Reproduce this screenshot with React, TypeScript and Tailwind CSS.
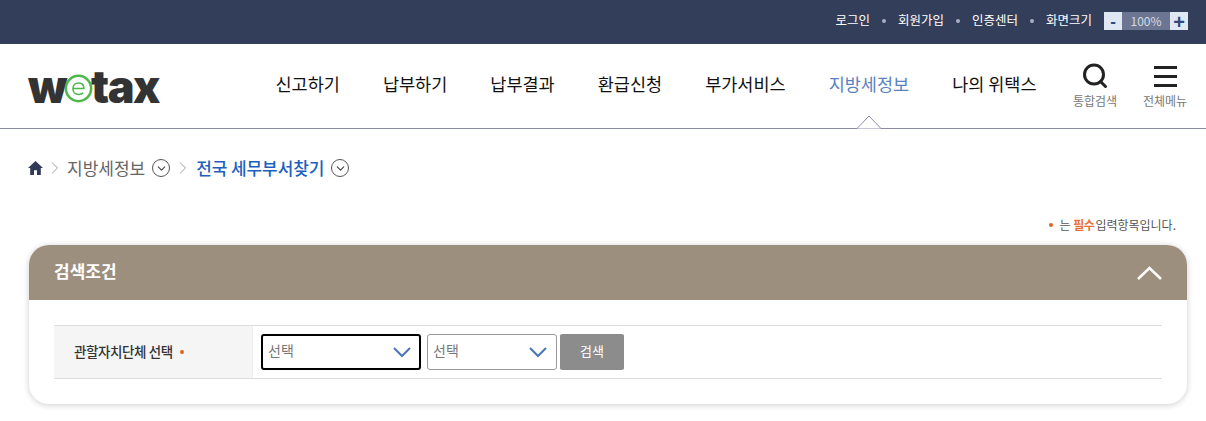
import { ChevronDown, ChevronRight } from 'lucide-react';

const font = { fontFamily: '"Noto Sans CJK KR", "Noto Sans", sans-serif' };

const topLinks = ['로그인', '회원가입', '인증센터', '화면크기'];
const navItems = ['신고하기', '납부하기', '납부결과', '환급신청', '부가서비스', '지방세정보', '나의 위택스'];

function Logo() {
  return (
    <div className="flex h-[40px] w-[132px] items-center font-['Inter',sans-serif] text-[45px] leading-none font-black tracking-[-1.5px] text-[#333333]">
      <span>w</span>
      <svg width="29" height="29" viewBox="0 0 28 28" className="mx-[-2px] mt-[5px] shrink-0">
        <circle cx="14" cy="14" r="12.2" fill="#fff" stroke="#4cb848" strokeWidth="2.4" />
        <path d="M8.6 14h10.6c0-3.4-2.2-5.4-5.1-5.4-3.2 0-5.5 2.3-5.5 5.6s2.300 5.500 5.600 5.500c1.900 0 3.300-.6 4.400-1.600" fill="none" stroke="#4cb848" strokeWidth="1.500" />
      </svg>
      <span>tax</span>
    </div>
  );
}

function CircleChevron() {
  return (
    <span className="grid size-[18px] place-items-center rounded-full border border-[#555]">
      <ChevronDown size={13} strokeWidth={2} className="text-[#444]" />
    </span>
  );
}

function SelectBox({ width, focused }: { width: string; focused?: boolean }) {
  return (
    <div
      className={`flex h-[36px] items-center justify-between rounded-[3px] bg-white pl-[5px] text-[14px] text-[#777] ${width} ${
        focused ? 'border-2 border-black pr-[8px]' : 'border border-[#999] pr-[9px]'
      }`}
    >
      <span className="mb-[3px]">선택</span>
      <svg width="18" height="11" viewBox="0 0 18 11" fill="none" stroke="#4a76b8" strokeWidth="2">
        <path d="M1 1l8 8 8-8" />
      </svg>
    </div>
  );
}

export default function App() {
  return (
    <div className="h-[421px] w-[1206px] overflow-hidden bg-white" style={font}>
      <div className="flex h-[44px] items-center justify-end bg-[#333e5b] pr-[18px] pb-[2px]">
        <ul className="mb-[1px] flex items-center text-[12.500px] text-white">
          {topLinks.map((t, i) => (
            <li key={t} className="flex items-center">
              {i > 0 && <span className="mx-[12px] size-[4px] rounded-full bg-[#a9afc0]" />}
              {t}
            </li>
          ))}
        </ul>
        <div className="ml-[12px] flex h-[18px] items-stretch text-[12px]">
          <span className="grid w-[18px] place-items-center bg-[#dfe7f3] font-['Liberation_Sans'] text-[17px] leading-none font-bold text-[#2f4a80]">-</span>
          <span className="grid w-[48px] place-items-center bg-[#6c7693] text-[#d5d9e4]">100%</span>
          <span className="grid w-[18px] place-items-center bg-[#dfe7f3] font-['Liberation_Sans'] text-[20px] leading-none font-bold text-[#2f4a80]">+</span>
        </div>
      </div>

      <header className="relative flex h-[85px] items-center border-b border-[#8a8ca6] pr-[19px] pl-[28px]">
        <Logo />
        <nav className="mb-[4px] ml-[115.500px] flex gap-[43px] text-[17.500px] text-[#111]">
          {navItems.map((n) => (
            <a key={n} className={n === '지방세정보' ? 'text-[#5a83c0]' : ''}>
              {n}
            </a>
          ))}
        </nav>
        <div className="ml-auto flex gap-[26px] text-[12px] text-[#777]">
          <div className="flex w-[44px] flex-col items-center">
            <svg width="26" height="26" viewBox="0 0 26 26" fill="none" stroke="#222" strokeWidth="3" className="mt-[1px]">
              <circle cx="12" cy="11.500" r="9.500" />
              <path d="M18.500 18.500l5 5" strokeLinecap="round" />
            </svg>
            <span className="mt-[3px] whitespace-nowrap">통합검색</span>
          </div>
          <div className="flex w-[44px] flex-col items-center">
            <div className="mt-[1px] flex h-[26px] w-[23px] flex-col justify-center gap-[6px]">
              <span className="h-[3px] bg-[#222]" />
              <span className="h-[3px] bg-[#222]" />
              <span className="h-[3px] bg-[#222]" />
            </div>
            <span className="mt-[3px] whitespace-nowrap">전체메뉴</span>
          </div>
        </div>
        <svg width="26" height="14" viewBox="0 0 26 14" className="absolute bottom-[-1px] left-[856px]">
          <path d="M0 13.500h1L13 1l12 12.500h1" fill="#fff" stroke="#8a8ca6" />
        </svg>
      </header>

      <div className="mt-[27px] flex h-[24px] items-center pl-[28px] text-[17px] text-[#666]">
        <svg width="15" height="14" viewBox="0 0 15 14" fill="#2f3a58">
          <path d="M7.500 0L0 7h2.200v7h3.800V9.200h3V14h3.800V7H15z" />
        </svg>
        <ChevronRight size={20} strokeWidth={1} className="mx-[2px] text-[#888]" />
        <span>지방세정보</span>
        <span className="ml-[7px]"><CircleChevron /></span>
        <ChevronRight size={20} strokeWidth={1} className="mx-[3px] text-[#888]" />
        <span className="font-medium tracking-[-0.1px] text-[#1c5fbf]">전국 세무부서찾기</span>
        <span className="ml-[7px]"><CircleChevron /></span>
      </div>

      <p className="mt-[36px] flex items-center justify-end pr-[30px] text-[12px] leading-[18px] text-[#555]">
        <span className="mr-[7px] size-[4px] rounded-full bg-[#e0641e]" />
        <span className="tracking-[-0.3px]">는</span>
        <b className="ml-[3px] font-bold tracking-[-0.5px] text-[#e8703a]">필수</b>
        <span className="ml-[1px]">입력항목입니다.</span>
      </p>

      <section className="mt-[11px] mr-[19px] ml-[29px] h-[159px] overflow-hidden rounded-[20px] bg-white shadow-[0_1px_6px_rgba(0,0,0,0.2)]">
        <div className="flex h-[55px] items-center justify-between bg-[#9d8f7e] pr-[25px] pl-[25px] text-[white]">
          <h2 className="mb-[3px] text-[17px] font-bold">검색조건</h2>
          <svg width="25" height="14" viewBox="0 0 25 14" fill="none" stroke="#fff" strokeWidth="2.500">
            <path d="M1 13L12.500 2 24 13" />
          </svg>
        </div>
        <div className="mx-[25px] mt-[25px] flex h-[54px] border-y border-[#ddd]">
          <div className="flex w-[199px] items-center border-r border-[#eee] bg-[#f5f5f5] pb-[1px] pl-[20px] text-[13.500px] font-medium tracking-[-0.4px] text-[#333]">
            관할자치단체 선택
            <span className="ml-[7px] size-[4px] rounded-full bg-[#e0641e]" />
          </div>
          <div className="flex items-center pl-[8px]">
            <SelectBox width="w-[160px]" focused />
            <span className="w-[6px]" />
            <SelectBox width="w-[130px]" />
            <button className="ml-[3px] h-[36px] w-[64px] rounded-[2px] bg-[#8c8c8c] pb-[2px] text-[13px] text-white">검색</button>
          </div>
        </div>
      </section>
    </div>
  );
}
